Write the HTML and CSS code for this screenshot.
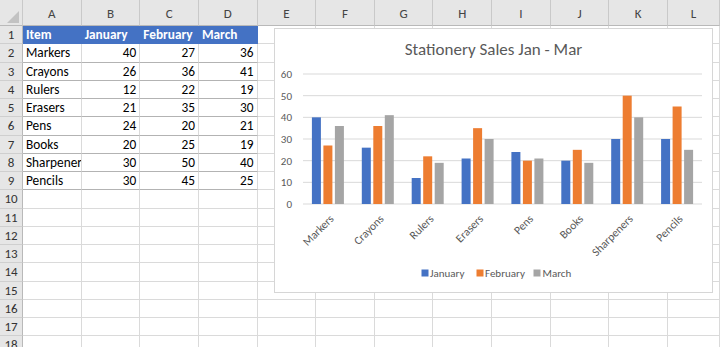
FILE: index.html
```html
<!DOCTYPE html>
<html>
<head>
	<meta charset="utf-8"/>
	<title>Stationery Sales</title>
	<link rel="stylesheet" href="styles.css">
</head>
<body>
	<div class="sheet">
		<div class="row heads"><div class="corner"></div><div>A</div><div>B</div><div>C</div><div>D</div><div>E</div><div>F</div><div>G</div><div>H</div><div>I</div><div>J</div><div>K</div><div>L</div></div>
		<div class="row"><div class="rn">1</div><div class="h">Item</div><div class="h">January</div><div class="h">February</div><div class="h">March</div><div></div><div></div><div></div><div></div><div></div><div></div><div></div><div></div></div>
		<div class="row"><div class="rn">2</div><div class="t">Markers</div><div class="t n">40</div><div class="t n">27</div><div class="t n">36</div><div></div><div></div><div></div><div></div><div></div><div></div><div></div><div></div></div>
		<div class="row"><div class="rn">3</div><div class="t">Crayons</div><div class="t n">26</div><div class="t n">36</div><div class="t n">41</div><div></div><div></div><div></div><div></div><div></div><div></div><div></div><div></div></div>
		<div class="row"><div class="rn">4</div><div class="t">Rulers</div><div class="t n">12</div><div class="t n">22</div><div class="t n">19</div><div></div><div></div><div></div><div></div><div></div><div></div><div></div><div></div></div>
		<div class="row"><div class="rn">5</div><div class="t">Erasers</div><div class="t n">21</div><div class="t n">35</div><div class="t n">30</div><div></div><div></div><div></div><div></div><div></div><div></div><div></div><div></div></div>
		<div class="row"><div class="rn">6</div><div class="t">Pens</div><div class="t n">24</div><div class="t n">20</div><div class="t n">21</div><div></div><div></div><div></div><div></div><div></div><div></div><div></div><div></div></div>
		<div class="row"><div class="rn">7</div><div class="t">Books</div><div class="t n">20</div><div class="t n">25</div><div class="t n">19</div><div></div><div></div><div></div><div></div><div></div><div></div><div></div><div></div></div>
		<div class="row"><div class="rn">8</div><div class="t">Sharpeners</div><div class="t n">30</div><div class="t n">50</div><div class="t n">40</div><div></div><div></div><div></div><div></div><div></div><div></div><div></div><div></div></div>
		<div class="row"><div class="rn">9</div><div class="t">Pencils</div><div class="t n">30</div><div class="t n">45</div><div class="t n">25</div><div></div><div></div><div></div><div></div><div></div><div></div><div></div><div></div></div>
		<div class="row"><div class="rn">10</div><div></div><div></div><div></div><div></div><div></div><div></div><div></div><div></div><div></div><div></div><div></div><div></div></div>
		<div class="row"><div class="rn">11</div><div></div><div></div><div></div><div></div><div></div><div></div><div></div><div></div><div></div><div></div><div></div><div></div></div>
		<div class="row"><div class="rn">12</div><div></div><div></div><div></div><div></div><div></div><div></div><div></div><div></div><div></div><div></div><div></div><div></div></div>
		<div class="row"><div class="rn">13</div><div></div><div></div><div></div><div></div><div></div><div></div><div></div><div></div><div></div><div></div><div></div><div></div></div>
		<div class="row"><div class="rn">14</div><div></div><div></div><div></div><div></div><div></div><div></div><div></div><div></div><div></div><div></div><div></div><div></div></div>
		<div class="row"><div class="rn">15</div><div></div><div></div><div></div><div></div><div></div><div></div><div></div><div></div><div></div><div></div><div></div><div></div></div>
		<div class="row"><div class="rn">16</div><div></div><div></div><div></div><div></div><div></div><div></div><div></div><div></div><div></div><div></div><div></div><div></div></div>
		<div class="row"><div class="rn">17</div><div></div><div></div><div></div><div></div><div></div><div></div><div></div><div></div><div></div><div></div><div></div><div></div></div>
		<div class="row"><div class="rn">18</div><div></div><div></div><div></div><div></div><div></div><div></div><div></div><div></div><div></div><div></div><div></div><div></div></div>

		<div class="chart">
			<svg width="437" height="263" viewBox="0 0 437 263">
				<text class="title" x="218.5" y="26" text-anchor="middle">Stationery Sales Jan - Mar</text>
				<g class="grid">
					<line x1="28" x2="427" y1="45" y2="45"/>
					<line x1="28" x2="427" y1="66.67" y2="66.67"/>
					<line x1="28" x2="427" y1="88.33" y2="88.33"/>
					<line x1="28" x2="427" y1="110" y2="110"/>
					<line x1="28" x2="427" y1="131.67" y2="131.67"/>
					<line x1="28" x2="427" y1="153.33" y2="153.33"/>
					<line x1="28" x2="427" y1="175" y2="175"/>
				</g>
				<g class="axis" text-anchor="end">
					<text x="17" y="49">60</text>
					<text x="17" y="70.7">50</text>
					<text x="17" y="92.3">40</text>
					<text x="17" y="114">30</text>
					<text x="17" y="135.7">20</text>
					<text x="17" y="157.3">10</text>
					<text x="17" y="179">0</text>
				</g>
				<!-- bars: value units scaled up from the 0 line -->
				<g transform="translate(0,175) scale(1,-2.1667)">
					<g transform="translate(36.9,0)"><rect class="jan" width="9" height="40"/><rect class="feb" x="11.5" width="9" height="27"/><rect class="mar" x="23" width="9" height="36"/></g>
					<g transform="translate(86.8,0)"><rect class="jan" width="9" height="26"/><rect class="feb" x="11.5" width="9" height="36"/><rect class="mar" x="23" width="9" height="41"/></g>
					<g transform="translate(136.7,0)"><rect class="jan" width="9" height="12"/><rect class="feb" x="11.5" width="9" height="22"/><rect class="mar" x="23" width="9" height="19"/></g>
					<g transform="translate(186.6,0)"><rect class="jan" width="9" height="21"/><rect class="feb" x="11.5" width="9" height="35"/><rect class="mar" x="23" width="9" height="30"/></g>
					<g transform="translate(236.4,0)"><rect class="jan" width="9" height="24"/><rect class="feb" x="11.5" width="9" height="20"/><rect class="mar" x="23" width="9" height="21"/></g>
					<g transform="translate(286.3,0)"><rect class="jan" width="9" height="20"/><rect class="feb" x="11.5" width="9" height="25"/><rect class="mar" x="23" width="9" height="19"/></g>
					<g transform="translate(336.2,0)"><rect class="jan" width="9" height="30"/><rect class="feb" x="11.5" width="9" height="50"/><rect class="mar" x="23" width="9" height="40"/></g>
					<g transform="translate(386.1,0)"><rect class="jan" width="9" height="30"/><rect class="feb" x="11.5" width="9" height="45"/><rect class="mar" x="23" width="9" height="25"/></g>
				</g>
				<g class="axis labels" text-anchor="end">
					<text transform="translate(59.5,190.5) rotate(-45)">Markers</text>
					<text transform="translate(109.5,190.5) rotate(-45)">Crayons</text>
					<text transform="translate(159.5,190.5) rotate(-45)">Rulers</text>
					<text transform="translate(209,190.5) rotate(-45)">Erasers</text>
					<text transform="translate(259,190.5) rotate(-45)">Pens</text>
					<text transform="translate(309,190.5) rotate(-45)">Books</text>
					<text transform="translate(358.7,190.5) rotate(-45)">Sharpeners</text>
					<text transform="translate(408.5,190.5) rotate(-45)">Pencils</text>
				</g>
				<g class="axis">
					<rect class="jan" x="146.5" y="240.5" width="7" height="7"/>
					<text x="155" y="248">January</text>
					<rect class="feb" x="201.5" y="240.5" width="7" height="7"/>
					<text x="210" y="248">February</text>
					<rect class="mar" x="258.5" y="240.5" width="7" height="7"/>
					<text x="267.5" y="248">March</text>
				</g>
			</svg>
		</div>
	</div>
</body>
</html>
```

FILE: styles.css
```css
html, body {height: 100%;}
body {margin: 0; overflow: hidden; background: #fff;}
.sheet {position: relative; font-family: Carlito, Lato, "Liberation Sans", sans-serif; font-size: 13.3px; color: #000;}

.row {display: grid; grid-template-columns: 23px repeat(11, 58.65px) 1fr; height: 18.25px;}
.row > div {box-sizing: border-box; border-right: 1px solid #dadada; border-bottom: 1px solid #dadada; padding: 0 3px; line-height: 18px; white-space: nowrap; overflow: hidden;}

.heads {height: 26px;}
.heads > div {background: #e6e6e6; border-right-color: #c9c9c9; border-bottom-color: #b9b9b9; color: #444; text-align: center; line-height: 28px; font-size: 13px;}
.corner {position: relative;}
.corner::after {content: ""; position: absolute; right: 3px; bottom: 2px; width: 12px; height: 12px; background: #c2c2c2; clip-path: polygon(100% 0, 100% 100%, 0 100%);}

.row > .rn {background: #e6e6e6; border-right-color: #b9b9b9; border-bottom-color: #cfcfcf; color: #333; text-align: center; padding: 0; font-size: 13px;}

.row > .h {background: #4472c4; color: #fff; font-weight: bold; border-right-color: #4472c4; border-bottom-color: #4472c4;}
.row > .t {border-bottom-color: #b3b3b3;}
.n {text-align: right;}

.chart {position: absolute; left: 274px; top: 28px; width: 439px; height: 265px; box-sizing: border-box; background: #fff; border: 1px solid #d6d6d6;}
.chart svg {display: block;}
.title {font-size: 17px; fill: #595959;}
.axis {font-size: 11px; fill: #595959;}
.labels {font-size: 11.5px;}
.grid line {stroke: #d9d9d9; stroke-width: 1;}
.jan {fill: #4472c4;}
.feb {fill: #ed7d31;}
.mar {fill: #a5a5a5;}
```
